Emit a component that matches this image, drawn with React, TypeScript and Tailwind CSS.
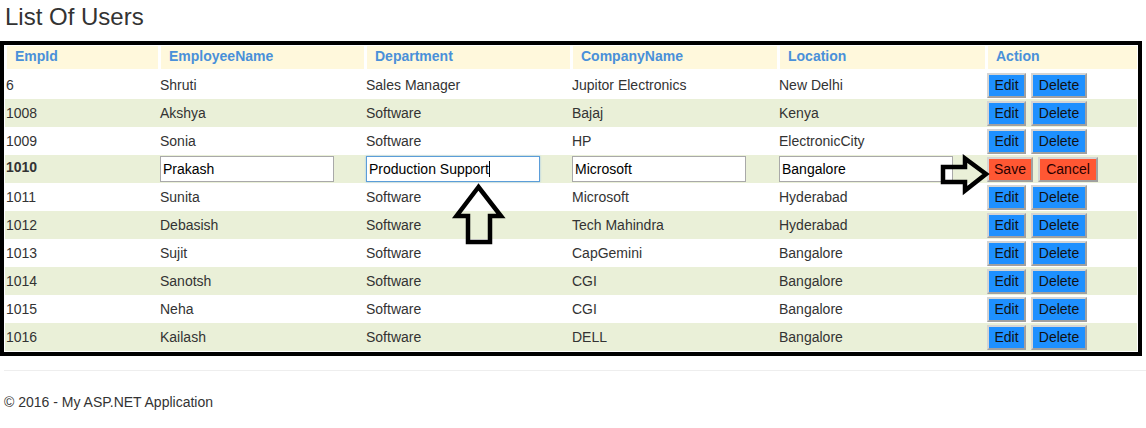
import React from 'react';

interface Employee {
  id: string;
  name: string;
  dept: string;
  company: string;
  location: string;
  editing?: boolean;
}

const EMPLOYEES: Employee[] = [
  { id: '6', name: 'Shruti', dept: 'Sales Manager', company: 'Jupitor Electronics', location: 'New Delhi' },
  { id: '1008', name: 'Akshya', dept: 'Software', company: 'Bajaj', location: 'Kenya' },
  { id: '1009', name: 'Sonia', dept: 'Software', company: 'HP', location: 'ElectronicCity' },
  { id: '1010', name: 'Prakash', dept: 'Production Support', company: 'Microsoft', location: 'Bangalore', editing: true },
  { id: '1011', name: 'Sunita', dept: 'Software', company: 'Microsoft', location: 'Hyderabad' },
  { id: '1012', name: 'Debasish', dept: 'Software', company: 'Tech Mahindra', location: 'Hyderabad' },
  { id: '1013', name: 'Sujit', dept: 'Software', company: 'CapGemini', location: 'Bangalore' },
  { id: '1014', name: 'Sanotsh', dept: 'Software', company: 'CGI', location: 'Bangalore' },
  { id: '1015', name: 'Neha', dept: 'Software', company: 'CGI', location: 'Bangalore' },
  { id: '1016', name: 'Kailash', dept: 'Software', company: 'DELL', location: 'Bangalore' },
];

const HEADERS = ['EmpId', 'EmployeeName', 'Department', 'CompanyName', 'Location', 'Action'];

const COLS = 'grid grid-cols-[154px_206px_206px_207px_208px_1fr]';

function TextBox({ value, focused }: { value: string; focused?: boolean }) {
  return (
    <div
      className={
        'w-[174px] h-[26px] flex items-center pl-[2px] bg-white text-[14px] text-black ' +
        (focused
          ? 'border border-[#5b9dd9] shadow-[0_0_2px_#9cc3ea]'
          : 'border border-[#a9a9a9]')
      }
    >
      {value}
      {focused && <span className="inline-block w-px h-[16px] bg-black" />}
    </div>
  );
}

function Btn({ label, red, w }: { label: string; red?: boolean; w: string }) {
  return (
    <button
      className={
        'h-[25px] flex items-center justify-center text-[14px] border-2 border-t-[#d4d4d4] border-l-[#d4d4d4] border-r-[#a0a0a0] border-b-[#a0a0a0] ' +
        (red ? 'bg-[#ff5733] text-[#2a0000] ' : 'bg-[#1e90ff] text-[#111] ') +
        w
      }
    >
      {label}
    </button>
  );
}

export default function App() {
  return (
    <div className="relative w-[1146px] h-[428px] bg-white text-[#333] text-[14px] font-['Liberation_Sans',Arial,sans-serif]">
      <h2 className="mt-[2px] pl-[5px] text-[24px] leading-[30px] text-[#333]">List Of Users</h2>

      {/* Users grid */}
      <div className="mt-[9px] w-[1142px] border-4 border-black pb-[1px]">
        <div className={COLS + ' pl-[2px] mt-[1px] h-[22px]'}>
          {HEADERS.map((h, i) => (
            <div
              key={h}
              className={
                'bg-[#fff8dc] ml-[1px] flex items-center pl-[8px] pb-[2px] font-bold text-[#4a90d9] ' +
                (i === HEADERS.length - 1 ? 'mr-[1px]' : 'mr-[2px]')
              }
            >
              {h}
            </div>
          ))}
        </div>

        <div className="mt-[3px] mx-[1px]">
          {EMPLOYEES.map((e, i) => (
            <div
              key={e.id}
              className={COLS + ' h-[28px] items-center pl-[1px] ' + (i % 2 === 1 ? 'bg-[#eaf0d8]' : 'bg-white')}
            >
              {e.editing ? (
                <>
                  <div className="font-bold -mt-[4px]">{e.id}</div>
                  <TextBox value={e.name} />
                  <TextBox value={e.dept} focused />
                  <TextBox value={e.company} />
                  <TextBox value={e.location} />
                  <div className="flex gap-[5px]">
                    <Btn label="Save" red w="w-[46px]" />
                    <Btn label="Cancel" red w="w-[60px]" />
                  </div>
                </>
              ) : (
                <>
                  <div>{e.id}</div>
                  <div>{e.name}</div>
                  <div>{e.dept}</div>
                  <div>{e.company}</div>
                  <div>{e.location}</div>
                  <div className="flex gap-[5px]">
                    <Btn label="Edit" w="w-[39px]" />
                    <Btn label="Delete" w="w-[56px]" />
                  </div>
                </>
              )}
            </div>
          ))}
        </div>
      </div>

      <footer className="ml-[4px] mt-[14px] border-t border-[#eee] pt-[21px] leading-[20px]">
        © 2016 - My ASP.NET Application
      </footer>

      {/* annotation arrows */}
      <svg className="absolute inset-0 pointer-events-none" width="1146" height="428">
        <polygon
          points="478.5,185 456.5,214 468,214 468,240 490,240 490,214 501,214"
          fill="none"
          stroke="#000"
          strokeWidth="4.5"
          strokeLinejoin="miter"
        />
        <polygon
          points="943,165 965,165 965,156.5 986,172 965,188.5 965,180 943,180"
          fill="none"
          stroke="#000"
          strokeWidth="4.5"
          strokeLinejoin="miter"
        />
      </svg>
    </div>
  );
}
